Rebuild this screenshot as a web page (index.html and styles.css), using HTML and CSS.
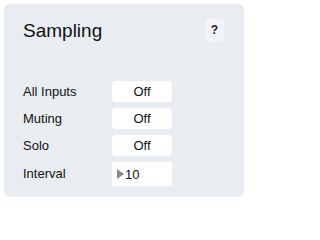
FILE: index.html
```html
<!DOCTYPE html>
<html>
<head>
<meta charset="utf-8">
<link rel="stylesheet" href="styles.css">
</head>
<body>
<div class="panel">
  <div class="header">
    <div class="title">Sampling</div>
    <div class="help">?</div>
  </div>
  <div class="rows">
    <div class="label">All Inputs</div>
    <div class="toggle">Off</div>
    <div class="label">Muting</div>
    <div class="toggle">Off</div>
    <div class="label">Solo</div>
    <div class="toggle">Off</div>
    <div class="label">Interval</div>
    <div class="number"><span class="tri"></span><span>10</span></div>
  </div>
</div>
</body>
</html>
```
FILE: styles.css
```css
html, body {
  margin: 0;
  padding: 0;
  background: #ffffff;
}
body {
  font-family: "Liberation Sans", Arial, sans-serif;
  color: #111111;
}
.panel {
  margin: 4px;
  width: 240px;
  height: 193px;
  box-sizing: border-box;
  background: #e9edf1;
  border-radius: 6px;
  padding: 15px 20px 0 18px;
}
.header {
  display: flex;
  justify-content: space-between;
  align-items: flex-start;
  height: 23px;
}
.title {
  font-size: 19px;
  line-height: 23px;
  padding-left: 1px;
}
.help {
  width: 19px;
  height: 23px;
  border-radius: 4px;
  background: #f2f4f7;
  font-size: 12px;
  font-weight: bold;
  line-height: 23px;
  text-align: center;
  color: #222;
}
.rows {
  margin-top: 39px;
  display: grid;
  grid-template-columns: 90px 60px;
  grid-auto-rows: 21px;
  row-gap: 6px;
  align-items: center;
  font-size: 13px;
}
.label {
  padding-left: 1px;
}
.toggle {
  height: 21px;
  line-height: 21px;
  background: #ffffff;
  border-radius: 4px;
  text-align: center;
}
.number {
  height: 24px;
  align-self: start;
  background: #ffffff;
  display: flex;
  align-items: center;
  padding-left: 5px;
  gap: 1px;
}
.rows > .label:nth-last-child(2) {
  align-self: start;
  line-height: 24px;
}
.tri {
  width: 0;
  height: 0;
  border-top: 5px solid transparent;
  border-bottom: 5px solid transparent;
  border-left: 7px solid #8c8c8c;
}
```
